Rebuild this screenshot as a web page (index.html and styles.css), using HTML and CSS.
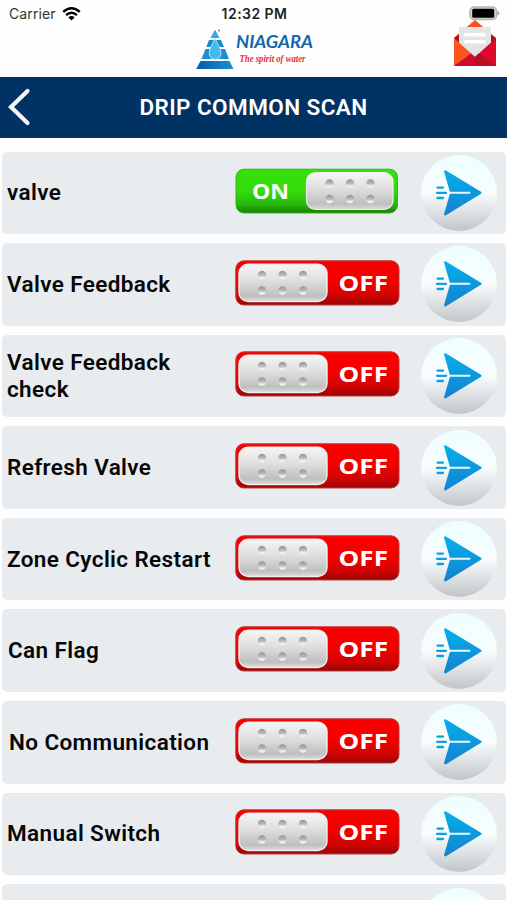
FILE: index.html
```html
<!DOCTYPE html>
<html lang="en">
<head>
  <meta charset="UTF-8" />
  <meta name="viewport" content="width=device-width, initial-scale=1">
  <title>Drip Common Scan</title>
  <link rel="stylesheet" href="styles.css">
</head>
<body>
  <!-- shared artwork -->
  <svg class="defs" width="0" height="0">
    <defs>
      <linearGradient id="green" x1="0" y1="0" x2="0" y2="1">
        <stop offset="0" stop-color="#35e00c"/><stop offset=".5" stop-color="#33dc0a"/><stop offset=".8" stop-color="#28b80c"/><stop offset="1" stop-color="#168000"/>
      </linearGradient>
      <linearGradient id="red" x1="0" y1="0" x2="0" y2="1">
        <stop offset="0" stop-color="#fa0000"/><stop offset=".45" stop-color="#f40000"/><stop offset=".8" stop-color="#cf0404"/><stop offset="1" stop-color="#980505"/>
      </linearGradient>
      <linearGradient id="metal" x1="0" y1="0" x2="0" y2="1">
        <stop offset="0" stop-color="#f6f6f6"/><stop offset=".45" stop-color="#dedede"/><stop offset=".85" stop-color="#bfbfbf"/><stop offset="1" stop-color="#dcdcdc"/>
      </linearGradient>
      <linearGradient id="dot" x1="0" y1="0" x2="0" y2="1">
        <stop offset="0" stop-color="#959595"/><stop offset=".5" stop-color="#b8b8b8"/><stop offset=".8" stop-color="#efefef"/><stop offset="1" stop-color="#f6f6f6"/>
      </linearGradient>
      <linearGradient id="disc" x1="0" y1="0" x2="0" y2="1">
        <stop offset="0" stop-color="#edffff"/><stop offset=".5" stop-color="#f8fcfd"/><stop offset=".7" stop-color="#e4e7e9"/><stop offset="1" stop-color="#c0c5c9"/>
      </linearGradient>
      <linearGradient id="plane" x1="0" y1="0" x2="0" y2="1">
        <stop offset="0" stop-color="#05aeea"/><stop offset="1" stop-color="#1483d0"/>
      </linearGradient>
      <linearGradient id="blue" x1="0" y1="0" x2="1" y2="0">
        <stop offset="0" stop-color="#075baa"/><stop offset="1" stop-color="#1b91d6"/>
      </linearGradient>
    </defs>
    <symbol id="dots" viewBox="0 0 50 25">
      <g fill="url(#dot)">
        <circle cx="4.5" cy="4.5" r="4.2"/><circle cx="25" cy="4.5" r="4.2"/><circle cx="45.5" cy="4.5" r="4.2"/>
        <circle cx="4.5" cy="20" r="4.2"/><circle cx="25" cy="20" r="4.2"/><circle cx="45.5" cy="20" r="4.2"/>
      </g>
    </symbol>
    <symbol id="send" viewBox="0 0 76 76">
      <circle cx="38" cy="38" r="38" fill="url(#disc)"/>
      <path d="M24.3 16.5 59.300 37.800 24.300 59.200 30.500 37.800Z" fill="url(#plane)" stroke="url(#plane)" stroke-width="2.5" stroke-linejoin="round"/>
      <path d="M29.500 37.800H48.500" stroke="#e9f7fd" stroke-width="1.900" stroke-linecap="round"/>
      <path d="M16.500 32.600H22M16 37.800H25M16.500 43H22" stroke="#109edf" stroke-width="2.300" stroke-linecap="round"/>
    </symbol>
  </svg>

  <header class="header">
    <div class="status">
      <div class="carrier">
        <span>Carrier</span>
        <svg width="19" height="14" viewBox="0 0 19 14">
          <g fill="none" stroke="#000" stroke-width="2.5">
            <path d="M1.200 4.900Q9.500-2.300 17.800 4.900"/>
            <path d="M4.100 8.100Q9.500 3.500 14.900 8.100"/>
          </g>
          <path d="M6.300 10.200Q9.500 7.700 12.700 10.200L9.500 13.400Z"/>
        </svg>
      </div>
      <div class="time">12:32 PM</div>
      <svg class="battery" width="31" height="15" viewBox="0 0 31 15">
        <rect x="1" y="1" width="26.500" height="12.500" rx="4" fill="#d4d4d4" stroke="#b4b4b4" stroke-width="1.500"/>
        <rect x="3.200" y="2.800" width="22" height="9" rx="1.500"/>
        <path d="M28.500 4.800Q32 7.200 28.500 9.700Z" fill="#999"/>
      </svg>
    </div>
    <div class="brand">
      <svg width="120" height="44" viewBox="0 0 120 44">
        <path d="M20 1.500 24.500 10H15.500Z" fill="#35a8e4"/>
        <path d="M14 12H26L29 19H11.300Z" fill="#138bd0"/>
        <path d="M10.500 21H30L34 31H6.500Z" fill="#1b8fd2"/>
        <path d="M5.500 33H34.500L38.500 41H1.200Z" fill="url(#blue)"/>
        <path d="M20 10C18.500 15 14.200 19.500 14.200 25.500A5.900 5.900 0 0 0 26 25.500C26 19.500 21.500 15 20 10Z" fill="#42bced" stroke="#d5effa" stroke-width=".8"/>
        <circle cx="24" cy="2.500" r="1" fill="#777"/>
        <text x="41" y="20.300" class="brand-name" textLength="77" lengthAdjust="spacingAndGlyphs">NIAGARA</text>
        <text x="44.500" y="34.300" class="brand-line" textLength="66" lengthAdjust="spacingAndGlyphs">The spirit of water</text>
      </svg>
      <svg class="mail" width="42" height="47" viewBox="0 0 42 47">
        <path d="M0 18 21 0 42 18V22H0Z" fill="#f8501f"/>
        <path d="M0 18 5 14V26Z" fill="#a51422"/><path d="M42 18 36 14V26Z" fill="#a51422"/>
        <path d="M5 7H37V24L21 38 5 24Z" fill="#e3e4e6"/>
        <path d="M11.500 14.700H30M11.500 21.700H30" stroke="#fff" stroke-width="3.600" stroke-linecap="round"/>
        <path d="M0 18 21 37 10 46H0Z" fill="#fb5522"/>
        <path d="M42 18 21 37 31 46H42Z" fill="#dc0a2c"/>
        <path d="M0 46 17 33.500 21 37 25 33.500 42 46Z" fill="#ce0c29"/>
        <path d="M21 37 25 33.500 42 46H21Z" fill="#b90d23"/>
      </svg>
    </div>
  </header>

  <div class="titlebar">
    <svg class="back" width="24" height="38" viewBox="0 0 24 38"><path d="M20.500 3 4 19 20.500 35" fill="none" stroke="#f4f6f8" stroke-width="4.200" stroke-linecap="round" stroke-linejoin="miter"/></svg>
    <h1>DRIP COMMON SCAN</h1>
  </div>

  <main class="list" id="list"></main>

  <script>
    const settings = [
      { name: 'valve', on: true },
      { name: 'Valve Feedback' },
      { name: 'Valve Feedback check' },
      { name: 'Refresh Valve' },
      { name: 'Zone Cyclic Restart' },
      { name: 'Can Flag', cls: 'inset-1' },
      { name: 'No Communication', cls: 'inset-2' },
      { name: 'Manual Switch' },
    ];

    const switchOn = `
      <rect x="1" y="1.2" width="161.5" height="43.8" rx="8" fill="url(#green)" stroke="#3cae24"/>
      <rect x="71.500" y="4.500" width="86.500" height="37" rx="9" fill="url(#metal)" stroke="#efefef" stroke-width="1.200"/>
      <use href="#dots" x="90" y="11" width="50" height="25"/>
      <text x="17" y="30.500" class="switch-text" textLength="37" lengthAdjust="spacingAndGlyphs">ON</text>`;
    const switchOff = `
      <rect x=".8" y=".8" width="163.2" height="44.2" rx="8" fill="url(#red)" stroke="#b93a3a"/>
      <rect x="4" y="4.300" width="88" height="37.200" rx="9" fill="url(#metal)" stroke="#eee" stroke-width="1.400"/>
      <use href="#dots" x="22.500" y="10.500" width="50" height="25"/>
      <text x="103.500" y="30.500" class="switch-text" textLength="49.500" lengthAdjust="spacingAndGlyphs">OFF</text>`;

    const row = s => `
      <div class="row">
        <div class="label ${s.cls || ''}">${s.name}</div>
        <svg class="switch" viewBox="0 0 165 46">${s.on ? switchOn : switchOff}</svg>
        <svg class="send"><use href="#send"/></svg>
      </div>`;

    // the last row only peeks in at the bottom of the screen
    const peek = '<div class="row peek"><svg class="send"><use href="#send"/></svg></div>';

    document.getElementById('list').innerHTML = settings.map(row).join('') + peek;
  </script>
</body>
</html>
```
FILE: styles.css
```css
:root {
  --navy: #003264;
  --row: #e9ecef;
}
* { box-sizing: border-box; }
body {
  margin: 0;
  height: 900px;
  overflow: hidden;
  display: flex; flex-direction: column;
  font-family: Roboto, sans-serif;
  background: #fefefe;
  color: #060708;
}
svg { display: block; flex: none; }
.defs { position: absolute; }
.header { height: 77px; flex: none; }
.status {
  height: 27px;
  display: grid;
  grid-template-columns: 1fr auto 1fr;
  align-items: center;
  padding: 0 7px 0 9px;
  font: 14px Inter, sans-serif;
}
.carrier { display: flex; align-items: center; gap: 6px; color: #333; letter-spacing: .1px; }
.time { font-weight: 600; color: #222; letter-spacing: .45px; }
.battery { justify-self: end; }
.brand {
  height: 50px;
  display: flex;
  position: relative;
  padding: 1px 0 0 195px;
}
.brand-name { font: italic bold 16.5px Lato, sans-serif; fill: #1266ad; }
.brand-line { font: italic bold 10.5px "Liberation Serif", serif; fill: #e52d3c; }
/* envelope hangs over the status bar */
.mail { position: absolute; top: -7px; right: 11px; }
.titlebar {
  height: 60.5px; flex: none;
  display: grid;
  grid-template-columns: 40px 1fr 40px;
  align-items: center;
  padding-left: 7px; padding-right: 7px;
  background: var(--navy);
}
.titlebar h1 {
  margin: 0;
  text-align: center;
  font-size: 22.5px; font-weight: 600; letter-spacing: .42px;
  color: #fff;
  white-space: nowrap;
}
.list {
  flex: 1; min-height: 0; overflow: hidden;
  padding: 14px 1px 0 2px;
  display: flex; flex-direction: column;
  gap: 9.1px;
}
.row {
  height: 82.5px; flex: none;
  display: flex; align-items: center;
  padding: 0 9px 0 5px;
  background: var(--row);
  border-radius: 5px;
}
.peek { justify-content: flex-end; }
.label {
  width: 228px; flex: none;
  padding-right: 15px;
  font-size: 22.5px; font-weight: 600; line-height: 27px;
  letter-spacing: .38px;
}
.inset-1 { padding-left: 1px; }
.inset-2 { padding-left: 2px; padding-right: 10px; }
.switch { width: 165px; height: 46px; margin: 0 21px 3px 0; }
.send { width: 76px; height: 76px; }
.switch-text { font: bold 22px "Open Sans", sans-serif; fill: #fff; }
```
